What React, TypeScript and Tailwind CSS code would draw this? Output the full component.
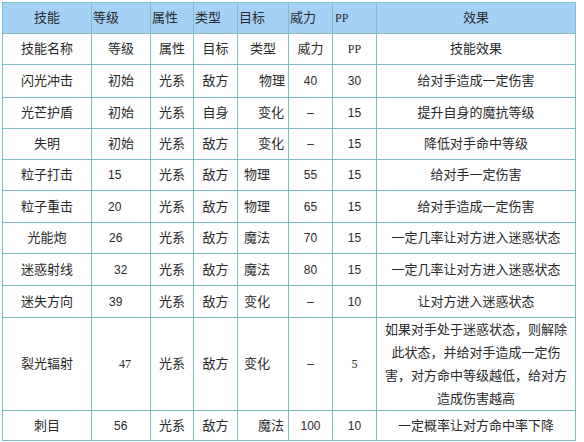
import React from "react";

type Cell = { t: React.ReactNode; a?: string };

const cjk = "font-['Liberation_Sans','Noto_Sans_CJK_SC',sans-serif]";

const widths = [89, 59, 43, 44, 51, 44, 44, 199];

const header: Cell[] = [
  { t: "技能", a: "text-center" },
  { t: "等级", a: "text-left pl-[1px]" },
  { t: "属性", a: "text-left pl-[1px]" },
  { t: "类型", a: "text-left pl-[1px]" },
  { t: "目标", a: "text-left pl-[1px]" },
  { t: "威力", a: "text-left pl-[1px]" },
  { t: "PP", a: "text-left pl-[2px] font-['Liberation_Serif'] text-[12px]" },
  { t: "效果", a: "text-center" },
];

const num = "font-['Liberation_Sans'] text-[12px] text-center";
const serif = "font-['Liberation_Serif'] text-[12px] text-center";
const left = "font-['Liberation_Sans'] text-[12px] text-left";

const rows: { h: string; cells: Cell[] }[] = [
  {
    h: "h-[31px]",
    cells: [
      { t: "技能名称" },
      { t: "等级" },
      { t: "属性" },
      { t: "目标" },
      { t: "类型" },
      { t: "威力" },
      { t: "PP", a: serif },
      { t: "技能效果" },
    ],
  },
  {
    h: "h-[33px]",
    cells: [
      { t: "闪光冲击" },
      { t: "初始" },
      { t: "光系" },
      { t: "敌方" },
      { t: "物理", a: "text-left pl-[21px]" },
      { t: "40", a: num },
      { t: "30", a: num },
      { t: "给对手造成一定伤害" },
    ],
  },
  {
    h: "h-[31px]",
    cells: [
      { t: "光芒护盾" },
      { t: "初始" },
      { t: "光系" },
      { t: "自身" },
      { t: "变化", a: "text-left pl-[20px]" },
      { t: "–", a: num },
      { t: "15", a: num },
      { t: "提升自身的魔抗等级" },
    ],
  },
  {
    h: "h-[31px]",
    cells: [
      { t: "失明" },
      { t: "初始" },
      { t: "光系" },
      { t: "敌方" },
      { t: "变化", a: "text-left pl-[20px]" },
      { t: "–", a: num },
      { t: "15", a: num },
      { t: "降低对手命中等级" },
    ],
  },
  {
    h: "h-[31px]",
    cells: [
      { t: "粒子打击" },
      { t: "15", a: left + " pl-[16px]" },
      { t: "光系" },
      { t: "敌方" },
      { t: "物理", a: "text-left pl-[6px]" },
      { t: "55", a: num },
      { t: "15", a: num },
      { t: "给对手一定伤害" },
    ],
  },
  {
    h: "h-[32px]",
    cells: [
      { t: "粒子重击" },
      { t: "20", a: left + " pl-[16px]" },
      { t: "光系" },
      { t: "敌方" },
      { t: "物理", a: "text-left pl-[6px]" },
      { t: "65", a: num },
      { t: "15", a: num },
      { t: "给对手造成一定伤害" },
    ],
  },
  {
    h: "h-[31px]",
    cells: [
      { t: "光能炮" },
      { t: "26", a: left + " pl-[17px]" },
      { t: "光系" },
      { t: "敌方" },
      { t: "魔法", a: "text-left pl-[6px]" },
      { t: "70", a: num },
      { t: "15", a: num },
      { t: "一定几率让对方进入迷惑状态" },
    ],
  },
  {
    h: "h-[32px]",
    cells: [
      { t: "迷惑射线" },
      { t: "32", a: left + " pl-[22px]" },
      { t: "光系" },
      { t: "敌方" },
      { t: "魔法", a: "text-left pl-[6px]" },
      { t: "80", a: num },
      { t: "15", a: num },
      { t: "一定几率让对方进入迷惑状态" },
    ],
  },
  {
    h: "h-[32px]",
    cells: [
      { t: "迷失方向" },
      { t: "39", a: left + " pl-[17px]" },
      { t: "光系" },
      { t: "敌方" },
      { t: "变化", a: "text-left pl-[6px]" },
      { t: "–", a: num },
      { t: "10", a: num },
      { t: "让对方进入迷惑状态" },
    ],
  },
  {
    h: "h-[93px]",
    cells: [
      { t: "裂光辐射" },
      { t: "47", a: "font-['Liberation_Serif'] text-[12px] text-left pl-[27px]" },
      { t: "光系" },
      { t: "敌方" },
      { t: "变化", a: "text-left pl-[6px]" },
      { t: "–", a: num },
      { t: "5", a: serif },
      {
        t: (
          <span className="block leading-[23px]">
            如果对手处于迷惑状态，则解除
            <br />
            此状态，并给对手造成一定伤
            <br />
            害，对方命中等级越低，给对方
            <br />
            造成伤害越高
          </span>
        ),
      },
    ],
  },
  {
    h: "h-[30px]",
    cells: [
      { t: "刺目" },
      { t: "56", a: left + " pl-[22px]" },
      { t: "光系" },
      { t: "敌方" },
      { t: "魔法", a: "text-left pl-[20px]" },
      { t: "100", a: num },
      { t: "10", a: num },
      { t: "一定概率让对方命中率下降" },
    ],
  },
];

export default function App() {
  return (
    <div className={`w-[584px] h-[442px] bg-white pt-[2px] pl-[2px] ${cjk} text-[13px] text-[#2a2a2a]`}>
      <table className="table-fixed border-collapse border border-[#7ebdc2] w-[574px]">
        <colgroup>
          {widths.map((w, i) => (
            <col key={i} style={{ width: w }} />
          ))}
        </colgroup>
        <thead>
          <tr className="h-[31px] bg-[#a5d1f6]">
            {header.map((c, i) => (
              <th
                key={i}
                className={`border border-[#7ebdc2] font-normal p-0 whitespace-nowrap ${c.a ?? ""}`}
              >
                {c.t}
              </th>
            ))}
          </tr>
        </thead>
        <tbody>
          {rows.map((r, ri) => (
            <tr key={ri} className={r.h}>
              {r.cells.map((c, ci) => (
                <td
                  key={ci}
                  className={`border border-[#7ebdc2] p-0 whitespace-nowrap align-middle ${c.a ?? "text-center"}`}
                >
                  {c.t}
                </td>
              ))}
            </tr>
          ))}
        </tbody>
      </table>
    </div>
  );
}
